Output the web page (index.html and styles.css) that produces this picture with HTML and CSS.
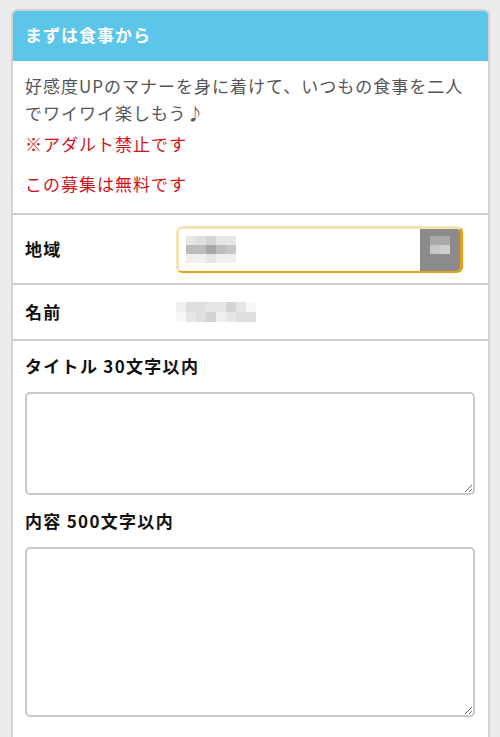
FILE: index.html
```html
<!DOCTYPE html>
<html lang="ja">
<head>
<meta charset="utf-8">
<title>まずは食事から</title>
<link rel="stylesheet" href="styles.css">
</head>
<body>
<div class="card">
  <div class="card-head">まずは食事から</div>
  <div class="intro">
    <p class="lead">好感度UPのマナーを身に着けて、いつもの食事を二人<br>でワイワイ楽しもう♪</p>
    <p class="warn">※アダルト禁止です</p>
    <p class="warn free">この募集は無料です</p>
  </div>
  <div class="row row-area">
    <div class="label">地域</div>
    <div class="select">
      <div class="select-val">
        <div class="mosaic m5">
          <span class="c2"></span><span class="c3"></span><span class="c4"></span><span class="c2"></span><span class="c2"></span>
          <span class="c6"></span><span class="c6"></span><span class="c7"></span><span class="c6"></span><span class="c5"></span>
          <span class="c1"></span><span class="c1"></span><span class="c2"></span><span class="c1"></span><span class="c1"></span>
        </div>
      </div>
      <div class="select-btn">
        <div class="mosaic m2">
          <span class="b1"></span><span class="b1"></span>
          <span class="b2"></span><span class="b3"></span>
        </div>
      </div>
    </div>
  </div>
  <div class="row row-name">
    <div class="label">名前</div>
    <div class="mosaic m8">
      <span class="c1"></span><span class="c3"></span><span class="c3"></span><span class="c2"></span><span class="c2"></span><span class="c4"></span><span class="c2"></span><span class="c0"></span>
      <span class="c0"></span><span class="c2"></span><span class="c3"></span><span class="c4"></span><span class="c1"></span><span class="c2"></span><span class="c3"></span><span class="c3"></span>
    </div>
  </div>
  <div class="block">
    <div class="label">タイトル 30文字以内</div>
    <textarea class="field field-title"></textarea>
    <div class="label">内容 500文字以内</div>
    <textarea class="field field-body"></textarea>
  </div>
</div>
</body>
</html>
```

FILE: styles.css
```css
html, body {
  margin: 0;
  padding: 0;
}
body {
  background: #ebebeb;
  padding: 9px 10px 0 11px;
  font-family: "Noto Sans CJK JP", "Noto Sans", sans-serif;
  color: #111;
  letter-spacing: 1px;
}
.card {
  background: #fff;
  border: 2px solid #d2d2d2;
  border-bottom: none;
  border-radius: 6px 6px 0 0;
  overflow: hidden;
  min-height: 760px;
}
.card-head {
  background: #5bc5ea;
  color: #fff;
  font-weight: 700;
  font-size: 17px;
  height: 50px;
  line-height: 48px;
  padding-left: 12px;
}
.intro {
  padding: 11px 8px 16px 12px;
  font-size: 17px;
  line-height: 27px;
}
.intro p {
  margin: 0;
}
.lead {
  color: #555;
}
.warn {
  color: #d0121b;
  margin-top: 4px !important;
}
.warn.free {
  margin-top: 13px !important;
}
.row {
  border-top: 2px solid #cfcfcf;
  display: grid;
  grid-template-columns: 151px 1fr;
  align-items: center;
  padding: 0 25px 0 12px;
}
.row-area {
  height: 68px;
}
.row-name {
  height: 54px;
}
.label {
  font-size: 17px;
  font-weight: 700;
  line-height: 24px;
  color: #111;
  letter-spacing: 1.3px;
}
.select {
  height: 47px;
  box-sizing: border-box;
  border: 3px solid #f3e2b6;
  border-bottom: 2px solid #e8a114;
  border-right-color: #e8a114;
  border-radius: 6px;
  display: flex;
  overflow: hidden;
  background: #fff;
}
.select-val {
  flex: 1;
  display: flex;
  align-items: center;
  padding-left: 7px;
}
.select-btn {
  width: 40px;
  background: #8b8b8b;
  display: flex;
  justify-content: center;
  align-items: flex-start;
  padding-top: 7px;
  box-sizing: border-box;
}
.mosaic {
  display: grid;
}
.mosaic span {
  display: block;
  height: 9px;
}
.m5 {
  grid-template-columns: repeat(5, 10px);
}
.m2 {
  grid-template-columns: repeat(2, 10px);
}
.m8 {
  grid-template-columns: repeat(8, 10px);
}
.m8 span {
  height: 10px;
}
.c0 { background: #f7f7f7; }
.c1 { background: #efefef; }
.c2 { background: #e6e6e6; }
.c3 { background: #dedede; }
.c4 { background: #d4d4d4; }
.c5 { background: #c6c6c6; }
.c6 { background: #bcbcbc; }
.c7 { background: #a8a8a8; }
.b1 { background: #a9a9a9; }
.b2 { background: #c7c7c7; }
.b3 { background: #cfcfcf; }
.block {
  border-top: 2px solid #cfcfcf;
  padding: 13px 13px 20px 12px;
  display: flex;
  flex-direction: column;
}
.field {
  display: block;
  box-sizing: border-box;
  width: 100%;
  border: 2px solid #c8c8c8;
  border-radius: 5px;
  background: #fff;
  margin: 14px 0;
  resize: vertical;
  font: inherit;
}
.field-title {
  height: 103px;
}
.field-body {
  height: 170px;
  margin-bottom: 0;
}
```
